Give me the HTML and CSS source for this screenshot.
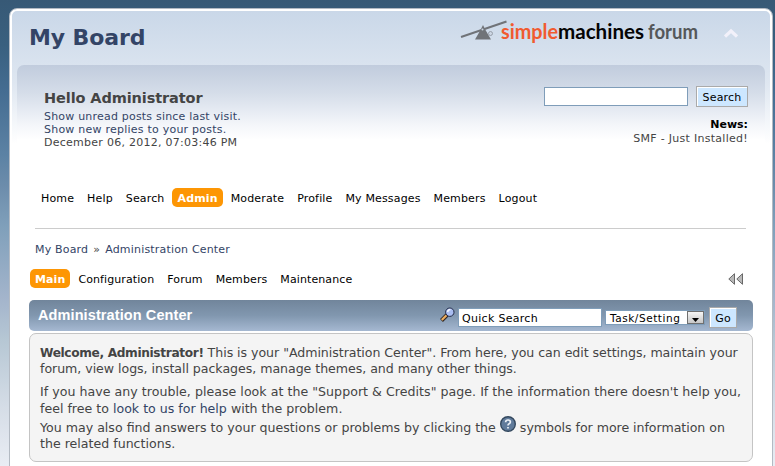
FILE: index.html
```html
<!DOCTYPE html>
<html lang="en">
<head>
<meta charset="utf-8">
<title>Administration Center</title>
<link rel="stylesheet" href="styles.css">
</head>
<body>
<div class="wrapper">
  <header class="header">
    <h1 class="forum-title">My Board</h1>
    <svg class="logo" width="242" height="30" viewBox="0 0 242 30">
      <path d="M1 18 46.500 2.500" stroke="#707378" stroke-width="2"/>
      <path d="M23 6 25.500 11 31 20.500H15L20.500 11Z" fill="#707378"/>
      <circle cx="22.500" cy="10.500" r="1" fill="#c9d4e1"/>
      <circle cx="30.500" cy="14.500" r="2" fill="#cdd7e4" stroke="#8b929c" stroke-width=".8"/>
      <text x="41" y="19.500" textLength="57" lengthAdjust="spacingAndGlyphs" fill="#f15a30">simple</text>
      <text x="98" y="19.500" textLength="86" lengthAdjust="spacingAndGlyphs" fill="#050505">machines</text>
      <text x="188" y="19.500" textLength="50" lengthAdjust="spacingAndGlyphs" fill="#55585a">forum</text>
    </svg>
    <svg class="collapse" width="14" height="10" viewBox="0 0 14 10"><path d="M1 8.500 7 3 13 8.500" fill="none" stroke="#f2f1fa" stroke-width="3.200"/></svg>
  </header>
  <section class="upper">
    <div class="user">
      <h2 class="greeting">Hello Administrator</h2>
      <a class="unread">Show unread posts since last visit.</a>
      <a class="replies">Show new replies to your posts.</a>
      <span class="date">December 06, 2012, 07:03:46 PM</span>
    </div>
    <div class="news">
      <form class="search"><input class="field" type="text"><button class="button" type="button">Search</button></form>
      <b class="news-title">News:</b>
      <span class="news-text">SMF - Just Installed!</span>
    </div>
  </section>
  <main class="content">
    <nav class="menu main-menu">
      <a>Home</a><a>Help</a><a>Search</a><a class="active">Admin</a><a>Moderate</a><a>Profile</a><a>My Messages</a><a>Members</a><a>Logout</a>
    </nav>
    <div class="crumbs"><a>My Board</a><span>»</span><a>Administration Center</a></div>
    <div class="subnav">
      <nav class="menu">
        <a class="active">Main</a><a>Configuration</a><a>Forum</a><a>Members</a><a>Maintenance</a>
      </nav>
      <svg class="rewind" width="16" height="12" viewBox="0 0 16 12"><path d="M.8 6 6.500.7V11.300ZM8.800 6 14.500.7V11.300Z" fill="#b9b9b9" stroke="#686868"/></svg>
    </div>
    <div class="titlebar">
      <h3>Administration Center</h3>
      <svg class="glass" width="15" height="16" viewBox="0 0 15 16"><path d="M1.500 13.500 7 8" stroke="#30251f" stroke-width="4"/><path d="M1.800 13 6.500 8.300" stroke="#edaf60" stroke-width="2.200"/><circle cx="9.800" cy="5.200" r="4.200" fill="#a9bdf0" stroke="#202846"/><path d="M7.500 5Q8 2.500 10.500 2.500" stroke="#f3f7ff" stroke-width="1.600" fill="none"/></svg>
      <input class="quick" type="text" value="Quick Search">
      <div class="select"><span>Task/Setting</span><i><svg width="7" height="4" viewBox="0 0 7 4"><path d="M0 0H7L3.500 4Z"/></svg></i></div>
      <button class="button go" type="button">Go</button>
    </div>
    <div class="panel">
      <p><b>Welcome, Administrator!</b> <span class="tight">This is your "Administration Center". From here, you can edit settings, maintain your</span><br><span class="tight">forum, view logs, install packages, manage themes, and many other things.</span></p>
      <p class="second"><span class="loose">If you have any trouble, please look at the "Support &amp; Credits" page. If the information there doesn't help you,</span><br>feel free to <a>look to us for help</a> with the problem.</p>
      <p class="third">You may also find answers to your questions or problems by clicking the <svg class="help" width="16" height="16" viewBox="0 0 16 16"><circle cx="8" cy="8" r="7.300" fill="#607b9b" stroke="#34495f" stroke-width="1.400"/><path d="M5.600 6.200Q5.700 4 8 4T10.400 6Q10.400 7.200 8.800 8 8 8.400 8 9.500M8 11V12.600" stroke="#edf2f8" stroke-width="1.700" fill="none"/></svg> <span class="tight">symbols for more information on</span><br>the related functions.</p>
    </div>
  </main>
</div>
</body>
</html>
```
FILE: styles.css
```css
* { box-sizing: border-box; }
html { height: 100%; overflow: hidden; }
body {
  margin: 0;
  height: 466px;
  padding: 8px 2px 0 9px;
  overflow: hidden;
  background: linear-gradient(#375976 0, #39607f 45px, #446c91 90px, #5c82a4 155px, #6c8cab 185px, #7f9fba 225px, #a4b5cc 300px, #b6c7d4 340px, #d4dce6 405px, #e9edf4 466px);
  font: 11px/13px Verdana, "DejaVu Sans", sans-serif;
  color: #444;
}
h1, h2, h3, p { margin: 0; }
.wrapper {
  height: 480px;
  border: 1px solid #b3bac3;
  border-radius: 8px 8px 0 0;
  background: linear-gradient(#c9d7e8, #dfe7f1 75px, #fff 135px);
  box-shadow: inset 0 0 0 2px #fff;
  padding: 0 7px;
}
.header { height: 56px; display: flex; align-items: flex-start; padding: 10px 27px 0 12px; }
.forum-title { font-size: 22px; line-height: 37px; color: #334466; letter-spacing: -.1px; margin-right: auto; }
.logo { margin-right: 22px; }
.logo text { font: bold 20.5px Lato, sans-serif; stroke-width: .3px; }
.collapse { margin-top: 9px; }
.upper {
  height: 113px;
  border-radius: 7px 7px 0 0;
  background: linear-gradient(#c1ccdd, #d5dde9 28px, #f4f6fa 60px, #fff 75px);
  display: flex;
  justify-content: space-between;
  padding: 21px 17px 0 27px;
}
.user { display: flex; flex-direction: column; align-items: flex-start; letter-spacing: .23px; }
.greeting { font-size: 14.5px; line-height: 24px; letter-spacing: -.1px; }
a { color: #334466; }
.unread { letter-spacing: .2px; }
.date { letter-spacing: .26px; }
.news { display: flex; flex-direction: column; align-items: flex-end; }
.search { display: flex; gap: 8px; margin-bottom: 11px; align-items: center; height: 21px; }
.field { width: 144px; height: 19px; border: 1px solid #7f9db9; background: #fff; padding: 0; }
.button {
  width: 52px; height: 21px; padding: 1px 0 0;
  border: 1px solid #aaa;
  background: #cde7ff;
  box-shadow: inset 1px 1px #fff;
  font: 11px "DejaVu Sans", sans-serif;
  letter-spacing: .2px;
  color: #000;
}
.news-title { color: #000; line-height: 14px; }
.news-text { line-height: 14px; letter-spacing: .28px; }
.content { padding: 0 12px; }
.menu { display: flex; gap: 3px; letter-spacing: .15px; }
.menu a { color: #000; padding: 0 5px; height: 19px; line-height: 21px; border-radius: 5px; }
.menu .active { background: #fd9604; color: #fff; font-weight: bold; }
.main-menu { margin: 10px 6px 0; height: 41px; padding-left: 1px; }
.crumbs { display: flex; gap: 5px; margin: -1px 7px 0 6px; border-top: 1px solid #ccc; height: 42px; padding-top: 14px; letter-spacing: .18px; }
.subnav { display: flex; justify-content: space-between; padding: 0 9px 0 1px; height: 31px; margin-top: -1px; }
.subnav .menu { letter-spacing: .1px; }
.rewind { margin-top: 4px; }
.titlebar {
  height: 31px; border-radius: 5px;
  background: linear-gradient(#71859b, #8197af 50%, #a5b8d1);
  display: flex; align-items: flex-start;
  padding: 0 16px 0 9px;
}
.titlebar h3 { font: bold 14.5px/31px "Liberation Sans", sans-serif; letter-spacing: .1px; color: #fff; margin-right: auto; }
.glass { margin: 7px 3px 0 0; }
.quick { width: 144px; height: 19px; margin-top: 8px; border: 1px solid #7f9db9; padding: 1px 3px 0; font: 11px "DejaVu Sans", sans-serif; letter-spacing: .3px; color: #000; }
.select { display: flex; width: 100px; height: 15px; margin: 10px 4px 0 3px; background: #fff; border: 1px solid #7f9db9; color: #000; font-size: 10.500px; line-height: 14px; letter-spacing: .55px; padding-left: 4px; justify-content: space-between; }
.select i { width: 17px; height: 13px; border: 1px solid #707070; background: linear-gradient(#f6f6f6, #c7c7c7); display: flex; align-items: flex-end; justify-content: center; padding-bottom: 1px; }
.go { width: 28px; margin-top: 7px; }
.panel {
  margin-top: 2px; height: 129px;
  border: 1px solid #c4c4c4; border-radius: 7px;
  background: #f4f4f4;
  padding: 11px 0 0 10px;
  font-size: 12.6px; line-height: 16px;
  white-space: nowrap;
}
.panel b { font-size: 12.2px; letter-spacing: -.36px; }
.tight { letter-spacing: -.045px; }
.loose { letter-spacing: .03px; }
.second { margin-top: 6px; line-height: 17px; }
.third { margin-top: 3px; }
.help { vertical-align: 0; margin-top: -5px; }
```
